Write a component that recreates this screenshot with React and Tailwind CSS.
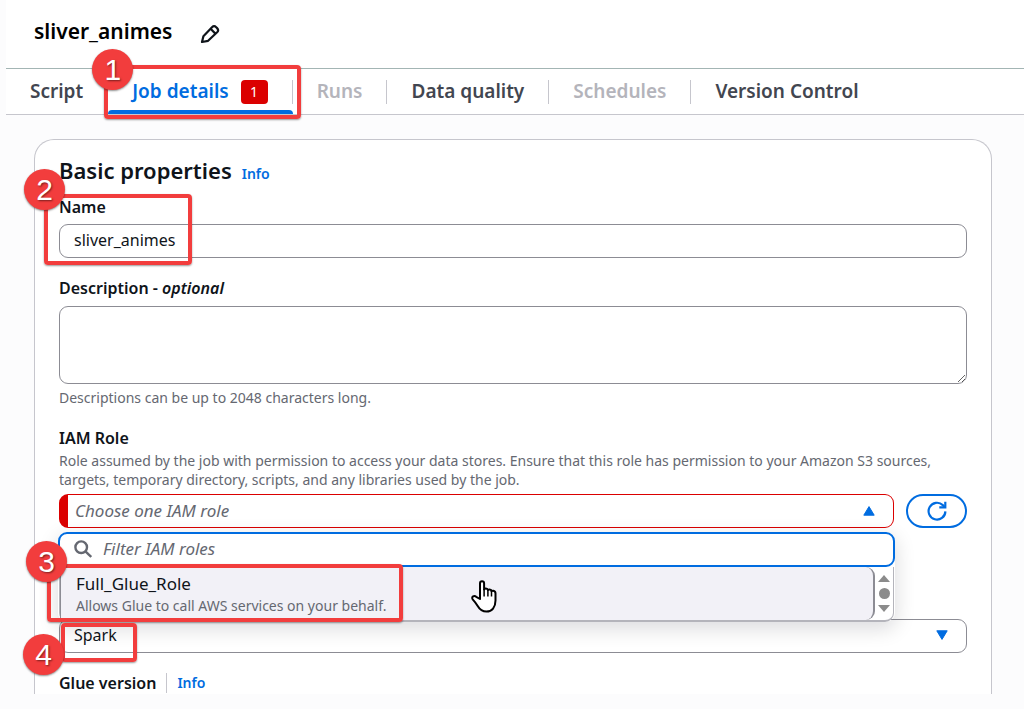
import React from "react";

const tabs = [
  { label: "Script" },
  { label: "Job details", active: true, badge: 1 },
  { label: "Runs", disabled: true },
  { label: "Data quality" },
  { label: "Schedules", disabled: true },
  { label: "Version Control" },
];

function Callout({ number, box, dot }) {
  return (
    <div
      className={`pointer-events-none absolute z-30 rounded border-4 border-[#f23d3d] shadow-[0_1px_2px_rgba(0,0,0,0.4)] ${box}`}
    >
      <span
        className={`absolute flex size-[41px] items-center justify-center rounded-full bg-[#f23d3d] font-['Liberation_Sans',sans-serif] text-[30px] leading-none text-white shadow-[0_1px_2px_rgba(0,0,0,0.45)] [text-shadow:1px_1px_2px_rgba(0,0,0,0.5)] ${dot}`}
      >
        {number}
      </span>
    </div>
  );
}

function PencilIcon() {
  return (
    <svg width="20" height="20" viewBox="0 0 20 20" fill="none" stroke="#0f141a" strokeWidth="2.2" strokeLinejoin="round" aria-hidden="true">
      <path d="M2 18l1.400-5.800 8.600-9a3 3 0 0 1 4.200 0l.9.9a3 3 0 0 1 0 4.200l-9 8.500z" />
      <path d="M10.600 4.800l4.800 4.800" />
    </svg>
  );
}

function RefreshIcon() {
  return (
    <svg width="20" height="20" viewBox="0 0 20 20" fill="none" stroke="#006ce0" strokeWidth="2.2" aria-hidden="true">
      <path d="M18.4 10.4a8.4 8.4 0 1 1-2.6-6.3l2.2 2.1" />
      <path d="M18.3 .8v5.6h-6" />
    </svg>
  );
}

function SearchIcon() {
  return (
    <svg width="18" height="18" viewBox="0 0 18 18" fill="none" stroke="#656871" strokeWidth="2.4" aria-hidden="true">
      <circle cx="7.2" cy="7.2" r="5.8" />
      <path d="M11.4 11.4l5.8 5.6" />
    </svg>
  );
}

function Triangle({ down, className }) {
  return (
    <svg width="12" height="10" viewBox="0 0 12 10" className={className} aria-hidden="true">
      <path
        d={down ? "M.8.8h10.4L6 9.4z" : "M.8 9.2h10.4L6 .6z"}
        fill="currentColor"
        stroke="currentColor"
        strokeWidth="1"
        strokeLinejoin="round"
      />
    </svg>
  );
}

function HandCursor({ className }) {
  return (
    <svg width="27" height="33" viewBox="0 0 27 33" className={className} aria-hidden="true">
      <path
        d="M9 19V3.4C9 1.9 9.8 1.2 11 1.2s2.1.7 2.1 2.2v6c.5-.7 1.300-1 2-.9 1 .1 1.600.7 1.800 1.600.5-.5 1.200-.7 1.900-.6 1 .1 1.600.8 1.700 1.700.5-.4 1.100-.5 1.800-.4 1.500.3 2.200 1.300 2.200 2.800v7c0 6.500-3.500 11-9 11-4 0-6.800-2-8.800-5.500-1.300-2.200-3-4.500-5-6.700-.8-1-.6-2.400.4-3 1-.6 2.200-.4 3.100.4z"
        fill="#fff"
        stroke="#000"
        strokeWidth="2"
        strokeLinejoin="round"
      />
      <path d="M13.100 9v7.500M16.900 10v6.500M20.500 11v5.500" stroke="#000" strokeWidth="1.500" fill="none" />
    </svg>
  );
}

export default function App() {
  return (
    <div className="min-h-screen bg-[#fcfcfd] pl-[6px] font-['Noto_Sans',sans-serif] text-[#0f141a]">
      <header className="flex h-[68px] items-center gap-7 bg-white pr-6 pb-1 pl-7">
        <h1 className="text-[21px] font-semibold text-black">sliver_animes</h1>
        <button type="button" aria-label="Edit job name" className="mt-1">
          <PencilIcon />
        </button>
      </header>

      <nav aria-label="Job sections" className="border-t border-b border-t-[#a3b5b4] border-b-[#c6c6cd] bg-white">
        <ul className="flex h-[45px] items-center">
          {tabs.map((tab) => (
            <li key={tab.label} className="group relative flex h-full items-center">
              <button
                type="button"
                disabled={tab.disabled}
                aria-current={tab.active ? "page" : undefined}
                className={`flex h-full items-center gap-3 px-6 text-[19px] font-semibold ${
                  tab.active ? "text-[#006ce0]" : tab.disabled ? "text-[#b4b4bb]" : "text-[#424650]"
                }`}
              >
                {tab.label}
                {tab.badge && (
                  <span className="flex h-6 w-[27px] items-center justify-center rounded bg-[#db0000] text-sm font-normal text-white">
                    {tab.badge}
                  </span>
                )}
              </button>
              <span className="h-6 w-px bg-[#c6c6cd] group-last:hidden" />
              {tab.active && (
                <>
                  <span className="absolute right-0 bottom-0 left-0 h-1 rounded-t bg-[#006ce0]" />
                  <Callout number={1} box="-top-1 -right-2 -bottom-[5px] -left-1" dot="-top-5 -left-4" />
                </>
              )}
            </li>
          ))}
        </ul>
      </nav>

      <main className="pt-6 pr-8 pb-4 pl-7">
        <section className="rounded-t-[20px] border border-b-0 border-[#c6c6cd] bg-white px-6 pt-3.5">
          <div className="flex items-baseline gap-2.5">
            <h2 className="text-[22px] leading-8 font-semibold">Basic properties</h2>
            <a href="#info" className="text-sm font-semibold text-[#006ce0]">
              Info
            </a>
          </div>

          <div className="relative mt-[11px]">
            <label htmlFor="name" className="block text-base leading-5 font-semibold">
              Name
            </label>
            <input
              id="name"
              defaultValue="sliver_animes"
              className="mt-[7px] block h-[34px] w-full rounded-[9px] border border-[#8c8c94] bg-white px-3.5 pb-0.5 text-base"
            />
            <Callout number={2} box="-top-[3px] -left-[15px] h-[71px] w-[148px]" dot="-top-[29px] -left-6" />
          </div>

          <div className="mt-[18px]">
            <label htmlFor="description" className="block text-base leading-6 font-semibold">
              Description - <i>optional</i>
            </label>
            <textarea
              id="description"
              className="mt-1.5 block h-[78px] w-full resize-y rounded-[9px] border border-[#8c8c94] bg-white px-3.5 py-2 text-base"
            />
            <p className="mt-1 text-sm text-[#656871]">Descriptions can be up to 2048 characters long.</p>
          </div>

          <div className="mt-[18px]">
            <span id="role-label" className="block text-base leading-6 font-semibold">
              IAM Role
            </span>
            <p className="mt-px text-sm leading-[19px] text-[#656871]">
              Role assumed by the job with permission to access your data stores. Ensure that this role has permission to
              your Amazon S3 sources, targets, temporary directory, scripts, and any libraries used by the job.
            </p>
            <div className="mt-[5px] flex gap-3">
              <div className="relative grow">
                <button
                  type="button"
                  aria-labelledby="role-label"
                  aria-expanded="true"
                  className="flex h-[34px] w-full items-center justify-between rounded-[9px] border border-l-[9px] border-[#db0000] bg-white pr-[18px] pl-[7px] text-[17px] text-[#656871] italic"
                >
                  Choose one IAM role
                  <Triangle className="text-[#006ce0]" />
                </button>

                <div className="absolute top-[38px] -right-px -left-px z-20 rounded-[9px] shadow-[0_6px_20px_1px_rgba(0,7,22,0.14)]">
                  <div className="flex h-[35px] items-center gap-[11px] rounded-[9px] border-2 border-[#006ce0] bg-white px-3.5 pb-px">
                    <SearchIcon />
                    <input
                      aria-label="Filter IAM roles"
                      placeholder="Filter IAM roles"
                      className="min-w-0 grow text-[17px] italic outline-none placeholder:text-[#656871]"
                    />
                  </div>
                  <div className="mx-px flex rounded-b-[9px] border-x border-b-2 border-[#b4b4bb] bg-white">
                    <div
                      role="listbox"
                      aria-label="IAM roles"
                      className="grow rounded-r-[9px] border-r-2 border-l border-[#8c8c94] bg-[#f2f1f7] pt-1.5 pb-1 pl-[15px]"
                    >
                      <div role="option" aria-selected="true">
                        <div className="text-[17px] leading-[22px]">Full_Glue_Role</div>
                        <div className="text-sm leading-[21px] text-[#656871]">
                          Allows Glue to call AWS services on your behalf.
                        </div>
                      </div>
                    </div>
                    <div className="flex w-[18px] flex-col items-center justify-center gap-1.5 text-[#8b8b8b]">
                      <svg width="12" height="7" viewBox="0 0 12 7" aria-hidden="true">
                        <path d="M0 7h12L6 0z" fill="currentColor" />
                      </svg>
                      <span className="size-[11px] rounded-full bg-[#8b8b8b]" />
                      <svg width="12" height="7" viewBox="0 0 12 7" aria-hidden="true">
                        <path d="M0 0h12L6 7z" fill="currentColor" />
                      </svg>
                    </div>
                  </div>
                  <HandCursor className="absolute top-12 left-[413px]" />
                  <Callout number={3} box="top-8 -left-[11px] h-[58px] w-[356px]" dot="-top-[27px] -left-[25px]" />
                </div>
              </div>
              <button
                type="button"
                aria-label="Refresh roles"
                className="flex h-[34px] w-[61px] items-center justify-center rounded-full border-2 border-[#006ce0] bg-white"
              >
                <RefreshIcon />
              </button>
            </div>
          </div>

          <div className="relative mt-[91px]">
            <select
              aria-label="Type"
              className="block h-[34px] w-full appearance-none rounded-[9px] border border-[#8c8c94] bg-white px-3.5 pb-0.5 text-base"
            >
              <option>Spark</option>
            </select>
            <Triangle down className="pointer-events-none absolute top-[11px] right-[19px] text-[#006ce0]" />
            <Callout number={4} box="top-1 left-[2px] h-[39px] w-[76px]" dot="top-[7px] -left-[42px]" />
          </div>

          <div className="mt-[19px] flex h-[22px] items-center gap-2.5">
            <h3 className="text-base font-semibold">Glue version</h3>
            <span className="h-5 w-px bg-[#c6c6cd]" />
            <a href="#glue-version" className="text-sm font-semibold text-[#006ce0]">
              Info
            </a>
          </div>
        </section>
      </main>
    </div>
  );
}
